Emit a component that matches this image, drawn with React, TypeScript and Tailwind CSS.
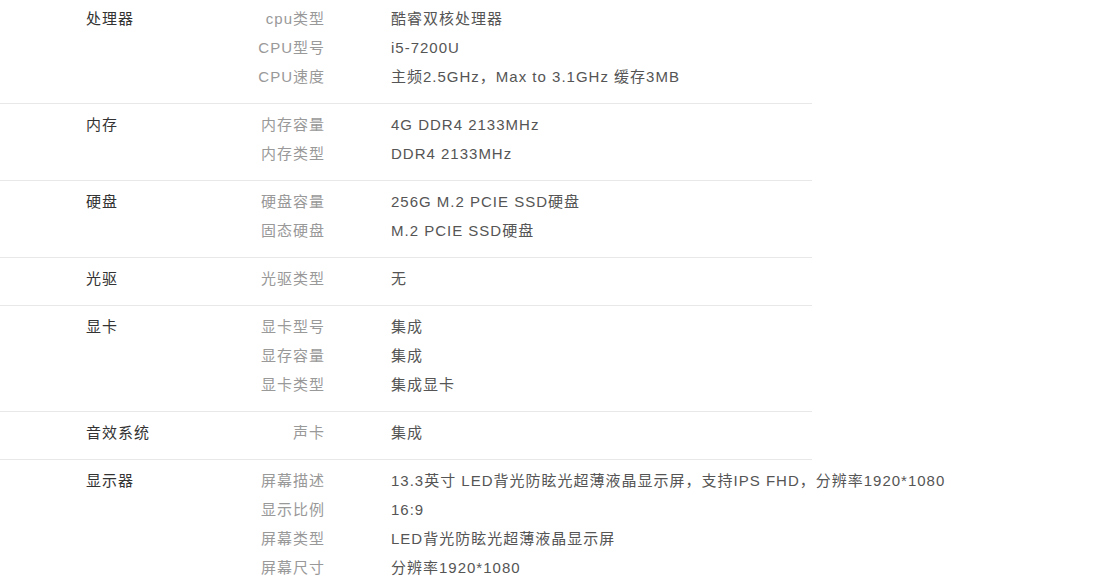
const sections: { name: string; rows: [string, string][] }[] = [
  {
    name: "处理器",
    rows: [
      ["cpu类型", "酷睿双核处理器"],
      ["CPU型号", "i5-7200U"],
      ["CPU速度", "主频2.5GHz，Max to 3.1GHz 缓存3MB"],
    ],
  },
  {
    name: "内存",
    rows: [
      ["内存容量", "4G DDR4 2133MHz"],
      ["内存类型", "DDR4 2133MHz"],
    ],
  },
  {
    name: "硬盘",
    rows: [
      ["硬盘容量", "256G M.2 PCIE SSD硬盘"],
      ["固态硬盘", "M.2 PCIE SSD硬盘"],
    ],
  },
  { name: "光驱", rows: [["光驱类型", "无"]] },
  {
    name: "显卡",
    rows: [
      ["显卡型号", "集成"],
      ["显存容量", "集成"],
      ["显卡类型", "集成显卡"],
    ],
  },
  { name: "音效系统", rows: [["声卡", "集成"]] },
  {
    name: "显示器",
    rows: [
      ["屏幕描述", "13.3英寸 LED背光防眩光超薄液晶显示屏，支持IPS FHD，分辨率1920*1080"],
      ["显示比例", "16:9"],
      ["屏幕类型", "LED背光防眩光超薄液晶显示屏"],
      ["屏幕尺寸", "分辨率1920*1080"],
    ],
  },
];

export default function App() {
  return (
    <div
      className="w-[1102px] h-[585px] overflow-hidden bg-white text-[15px] tracking-[1px]"
      style={{ fontFamily: '"Liberation Sans", "Noto Sans CJK SC", sans-serif' }}
    >
      <div className="w-[812px] -mt-[2px]">
        {sections.map((s, i) => (
          <div
            key={s.name}
            className={`flex pl-[86px] pt-[6px] pb-[12px] ${i > 0 ? "border-t border-[#e8e8e8]" : ""}`}
          >
            <div className="w-[150px] shrink-0 leading-[29px] text-[#333]">{s.name}</div>
            <div className="flex flex-col">
              {s.rows.map(([label, value]) => (
                <div key={label} className="flex leading-[29px]">
                  <div className="w-[89px] shrink-0 text-right text-[#999]">{label}</div>
                  <div className="pl-[66px] whitespace-nowrap text-[#555]">{value}</div>
                </div>
              ))}
            </div>
          </div>
        ))}
      </div>
    </div>
  );
}
